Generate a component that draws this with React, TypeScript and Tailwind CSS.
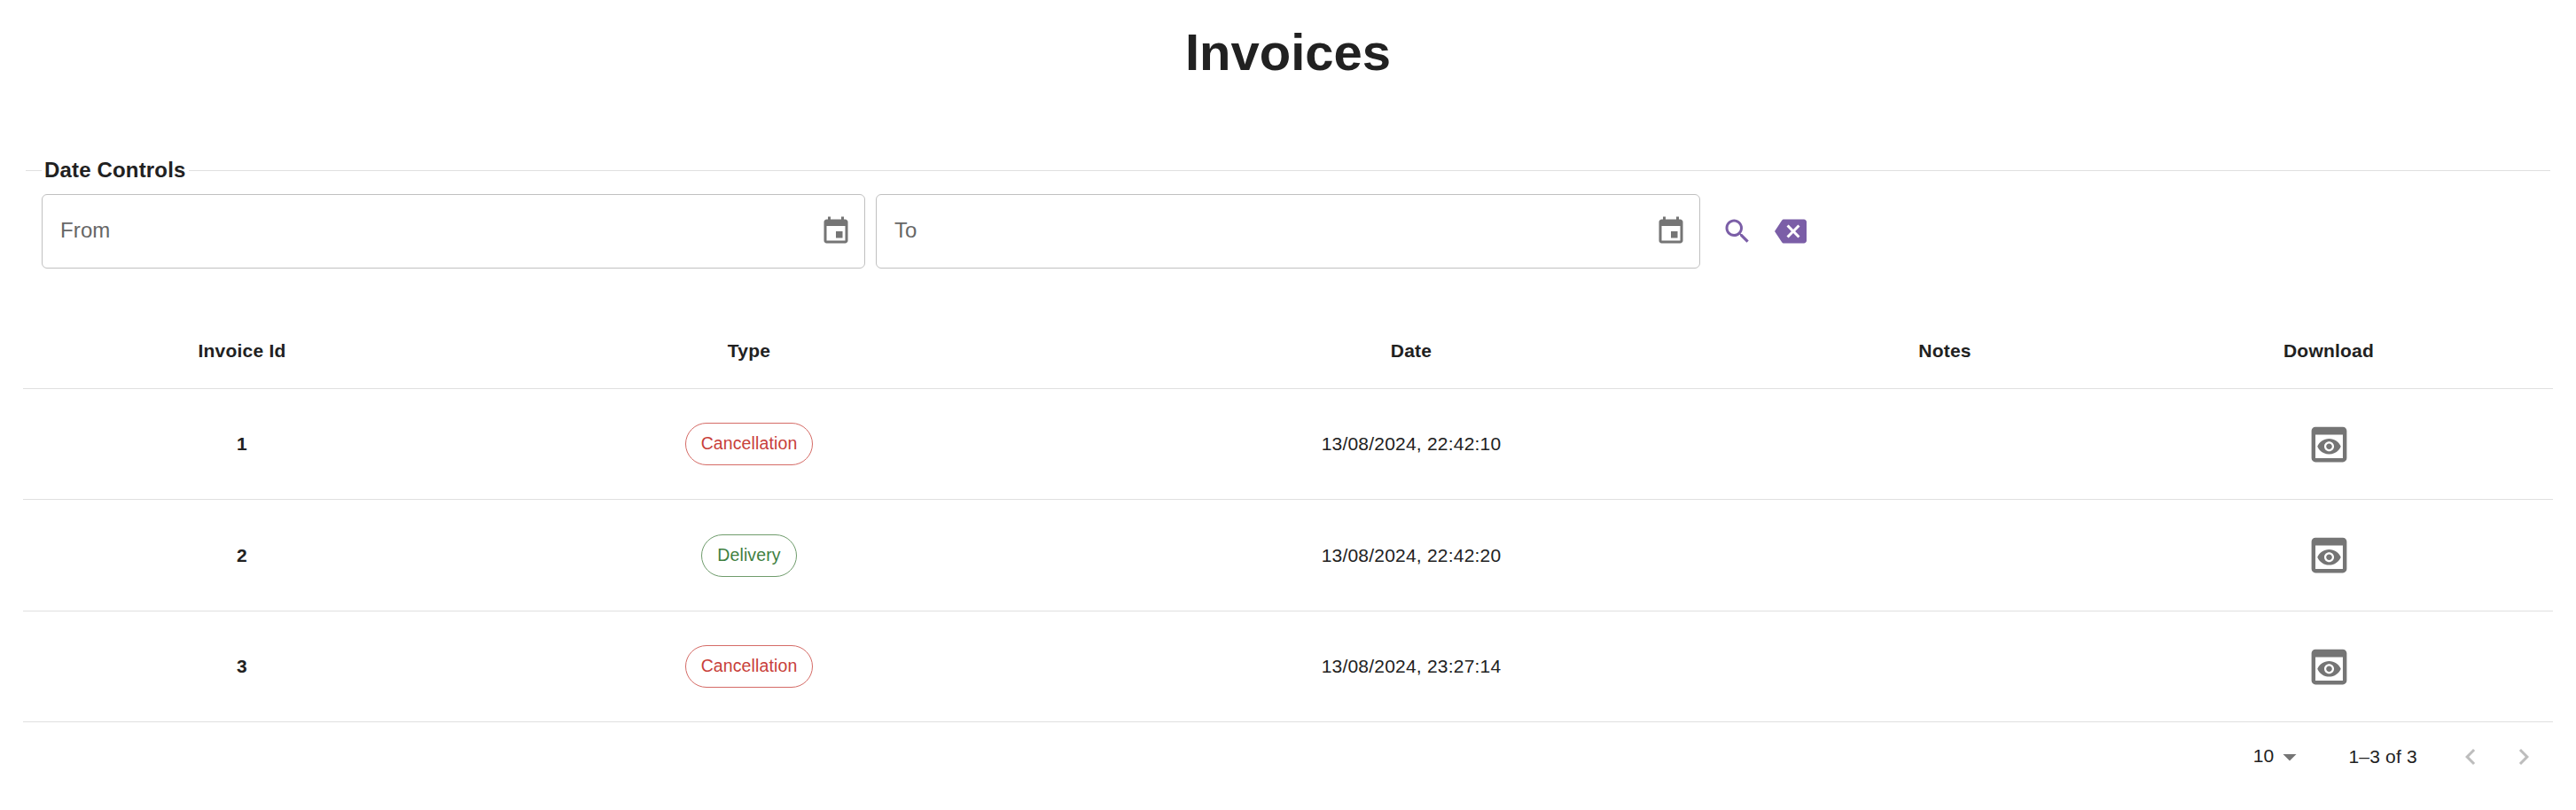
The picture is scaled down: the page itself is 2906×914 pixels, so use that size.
import React from "react";

const ICONS = {
  calendar:
    "M17 12h-5v5h5v-5zM16 1v2H8V1H6v2H5c-1.11 0-1.99.9-1.99 2L3 19c0 1.1.89 2 2 2h14c1.1 0 2-.9 2-2V5c0-1.1-.9-2-2-2h-1V1h-2zm3 18H5V8h14v11z",
  search:
    "M15.5 14h-.79l-.28-.27C15.41 12.59 16 11.11 16 9.5 16 5.91 13.09 3 9.5 3S3 5.91 3 9.5 5.91 16 9.5 16c1.61 0 3.09-.59 4.23-1.57l.27.28v.79l5 4.99L20.49 19l-4.99-5zm-6 0C7.01 14 5 11.99 5 9.5S7.01 5 9.5 5 14 7.01 14 9.5 11.99 14 9.5 14z",
  backspace:
    "M22 3H7c-.69 0-1.23.35-1.59.88L0 12l5.41 8.11c.36.53.9.89 1.59.89h15c1.1 0 2-.9 2-2V5c0-1.1-.9-2-2-2zm-3 12.59L17.59 17 14 13.41 10.41 17 9 15.59 12.59 12 9 8.41 10.41 7 14 10.59 17.59 7 19 8.41 15.41 12 19 15.59z",
  preview:
    "M19 3H5c-1.11 0-2 .9-2 2v14c0 1.1.89 2 2 2h14c1.1 0 2-.9 2-2V5c0-1.1-.89-2-2-2zm0 16H5V7h14v12zm-5.5-6c0 .83-.67 1.5-1.5 1.5s-1.5-.67-1.5-1.5.67-1.5 1.5-1.5 1.5.67 1.5 1.5zM12 9c-2.73 0-5.06 1.66-6 4 .94 2.34 3.27 4 6 4s5.06-1.66 6-4c-.94-2.34-3.27-4-6-4zm0 6.5c-1.38 0-2.5-1.12-2.5-2.5s1.12-2.5 2.5-2.5 2.5 1.12 2.5 2.5-1.12 2.5-2.5 2.5z",
  left: "M15.41 7.41 14 6l-6 6 6 6 1.41-1.41L10.83 12z",
  right: "M10 6 8.59 7.41 13.17 12l-4.58 4.59L10 18l6-6z",
  down: "m7 10 5 5 5-5z",
};

function Icon({ name, className }: { name: keyof typeof ICONS; className: string }) {
  return (
    <svg viewBox="0 0 24 24" fill="currentColor" className={"shrink-0 " + className}>
      <path d={ICONS[name]} />
    </svg>
  );
}

function DateField({ label, width }: { label: string; width: string }) {
  return (
    <div className={"flex h-[84px] items-center justify-between rounded-[6px] border border-[#c0c0c0] pr-[14px] pl-[20px] " + width}>
      <span className="pb-[2px] text-[24px] leading-[34px] tracking-[0.005em] text-[#666]">{label}</span>
      <Icon name="calendar" className="size-9 text-[#757575]" />
    </div>
  );
}

const COLUMNS = "grid grid-cols-[494px_650px_844px_360px_506px] items-center justify-items-center border-b border-[#e0e0e0]";

const ROWS = [
  { id: 1, type: "Cancellation", date: "13/08/2024, 22:42:10", height: "h-[125px]" },
  { id: 2, type: "Delivery", date: "13/08/2024, 22:42:20", height: "h-[126px]" },
  { id: 3, type: "Cancellation", date: "13/08/2024, 23:27:14", height: "h-[125px]" },
];

export default function App() {
  return (
    <main className="flex h-[914px] w-[2906px] flex-col bg-white pl-[26px] font-['Liberation_Sans',Arial,sans-serif] text-[21px] tracking-[0.01em] text-[#212121]">
      <h1 className="w-[2854px] pt-[24px] text-center text-[58px] leading-[70px] font-bold tracking-normal">Invoices</h1>

      <section className="mt-[80px] flex w-[2854px] flex-col">
        <div className="flex h-[36px] items-center pr-[3px] pl-[3px]">
          <div className="mt-[1px] h-px w-[18px] bg-[#e0e0e0]" />
          <h2 className="w-[166px] pl-[3px] text-[24px] leading-[36px] font-bold tracking-[0.007em] whitespace-nowrap">Date Controls</h2>
          <div className="mt-[1px] h-px grow bg-[#e0e0e0]" />
        </div>
        <div className="mt-[9px] flex items-center pl-[21px]">
          <DateField label="From" width="w-[929px]" />
          <div className="w-[12px]" />
          <DateField label="To" width="w-[930px]" />
          <button className="ml-[24px] text-[#7b5ea7]"><Icon name="search" className="size-[36px]" /></button>
          <button className="ml-[24px] text-[#7b5ea7]"><Icon name="backspace" className="size-[36px]" /></button>
        </div>
      </section>

      <section className="mt-[50px] w-[2854px]">
        <div className={COLUMNS + " h-[86px] font-bold"}>
          <span>Invoice Id</span>
          <span>Type</span>
          <span>Date</span>
          <span>Notes</span>
          <span>Download</span>
        </div>
        {ROWS.map((row) => (
          <div key={row.id} className={COLUMNS + " " + row.height}>
            <span className="font-bold">{row.id}</span>
            <span
              className={
                "flex h-[48px] items-center rounded-full border px-[17px] text-[19.5px] tracking-[0.006em] " +
                (row.type === "Delivery" ? "border-[#6f9c6c] text-[#3f7f3f]" : "border-[#d56b66] text-[#c8403a]")
              }
            >
              {row.type}
            </span>
            <span>{row.date}</span>
            <span />
            <Icon name="preview" className="size-[53px] text-[#757575]" />
          </div>
        ))}
        <footer className="flex h-[78px] items-center justify-end pr-[15px]">
          <span className="pb-[2px]">10</span>
          <Icon name="down" className="size-9 text-[#757575]" />
          <span className="ml-[48px]">1–3 of 3</span>
          <Icon name="left" className="ml-[42px] size-9 text-[#bdbdbd]" />
          <Icon name="right" className="ml-[24px] size-9 text-[#bdbdbd]" />
        </footer>
      </section>
    </main>
  );
}
